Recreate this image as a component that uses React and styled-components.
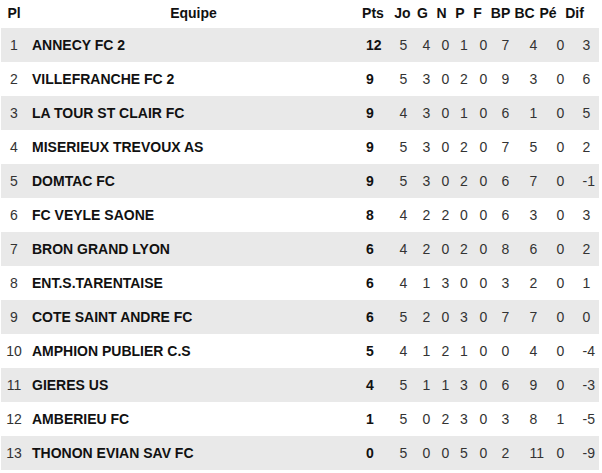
import React from 'react';
import styled, { createGlobalStyle } from 'styled-components';

const GlobalStyle = createGlobalStyle`
  body {
    margin: 0;
    background: #fff;
    font-family: "Liberation Sans", Arial, sans-serif;
  }
`;

const rows = [
  [1, 'ANNECY FC 2', 12, 5, 4, 0, 1, 0, 7, 4, 0, 3],
  [2, 'VILLEFRANCHE FC 2', 9, 5, 3, 0, 2, 0, 9, 3, 0, 6],
  [3, 'LA TOUR ST CLAIR FC', 9, 4, 3, 0, 1, 0, 6, 1, 0, 5],
  [4, 'MISERIEUX TREVOUX AS', 9, 5, 3, 0, 2, 0, 7, 5, 0, 2],
  [5, 'DOMTAC FC', 9, 5, 3, 0, 2, 0, 6, 7, 0, -1],
  [6, 'FC VEYLE SAONE', 8, 4, 2, 2, 0, 0, 6, 3, 0, 3],
  [7, 'BRON GRAND LYON', 6, 4, 2, 0, 2, 0, 8, 6, 0, 2],
  [8, 'ENT.S.TARENTAISE', 6, 4, 1, 3, 0, 0, 3, 2, 0, 1],
  [9, 'COTE SAINT ANDRE FC', 6, 5, 2, 0, 3, 0, 7, 7, 0, 0],
  [10, 'AMPHION PUBLIER C.S', 5, 4, 1, 2, 1, 0, 0, 4, 0, -4],
  [11, 'GIERES US', 4, 5, 1, 1, 3, 0, 6, 9, 0, -3],
  [12, 'AMBERIEU FC', 1, 5, 0, 2, 3, 0, 3, 8, 1, -5],
  [13, 'THONON EVIAN SAV FC', 0, 5, 0, 0, 5, 0, 2, 11, 0, -9],
];

const headers = ['Pl', 'Equipe', 'Pts', 'Jo', 'G', 'N', 'P', 'F', 'BP', 'BC', 'Pé', 'Dif'];

const Table = styled.div`
  width: 598px;
  margin-left: 1px;
  font-size: 14px;
  line-height: 16px;
`;

const HeadRow = styled.div`
  display: grid;
  grid-template-columns: 26px 333px 26px 33px 7px 31px 6px 29px 17px 31px 16px 37px 1fr;
  height: 28px;
  padding-top: 5px;
  box-sizing: border-box;
`;

const HeadCell = styled.div`
  display: flex;
  justify-content: center;
  font-weight: bold;
  color: #111;
  white-space: nowrap;
`;

const Row = styled.div`
  display: grid;
  grid-template-columns: 26px 339px 33.5px 23px 19px 18.5px 19.5px 22px 28px 27px 26px 1fr;
  align-items: center;
  height: 34px;
  background: ${p => (p.$shaded ? '#e9e9e9' : '#fff')};
`;

const Rank = styled.div`
  text-align: center;
  color: #333;
`;

const Team = styled.div`
  padding-left: 5px;
  font-weight: bold;
  color: #111;
  white-space: nowrap;
`;

const Stat = styled.div`
  color: #333;
  white-space: nowrap;
  font-weight: ${p => (p.$bold ? 'bold' : 'normal')};
  ${p => p.$bold && 'color: #111;'}
`;

export default function App() {
  return (
    <>
      <GlobalStyle />
      <Table>
        <HeadRow>
          {headers.map(h => (
            <HeadCell key={h}>{h}</HeadCell>
          ))}
        </HeadRow>
        {rows.map(([pl, team, ...stats], i) => (
          <Row key={pl} $shaded={i % 2 === 0}>
            <Rank>{pl}</Rank>
            <Team>{team}</Team>
            {stats.map((v, j) => (
              <Stat key={j} $bold={j === 0}>
                {v}
              </Stat>
            ))}
          </Row>
        ))}
      </Table>
    </>
  );
}
